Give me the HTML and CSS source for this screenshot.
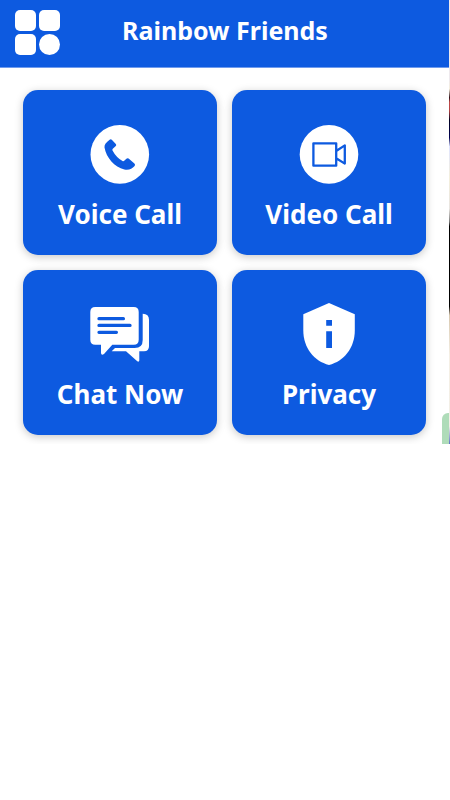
FILE: index.html
```html
<!DOCTYPE html>
<html lang="en">
<head>
<meta charset="utf-8">
<meta name="viewport" content="width=device-width, initial-scale=1">
<title>Rainbow Friends</title>
<link rel="stylesheet" href="styles.css">
</head>
<body>
<div class="screen">
  <header class="topbar">
    <button class="menu" type="button" aria-label="Menu">
      <svg width="45" height="45" viewBox="0 0 45 45" fill="#fff" aria-hidden="true">
        <rect width="21" height="21" rx="5"/>
        <rect x="24" width="21" height="21" rx="5"/>
        <rect y="24" width="21" height="21" rx="5"/>
        <circle cx="34.5" cy="34.5" r="10.5"/>
      </svg>
    </button>
    <h1 class="title">Rainbow Friends</h1>
  </header>
  <main class="grid">
    <button class="card" type="button">
      <svg class="icon" viewBox="0 0 64 64" aria-hidden="true">
        <circle cx="31.8" cy="32.4" r="29.3" fill="#fff"/>
        <path fill="#0d5ae0" d="M21.6 17.7q1.1-1 2.2 0l4 4.2q.9 1 0 2l-3 2.9q-.7.7-.3 1.6 3.6 6.8 10 10.6 1 .5 1.7-.2l2.200-2.100q1-1 2.2-.1l5.800 5q1.300 1.100.2 2.300c-2.500 2.900-5.800 4.400-10.200 3.500C26.500 45.300 18.300 35.900 16.500 25.600c-.4-3.100 1.700-5.100 5.100-7.900z"/>
      </svg>
      <span class="label">Voice Call</span>
    </button>
    <button class="card" type="button">
      <svg class="icon" viewBox="0 0 64 64" aria-hidden="true">
        <circle cx="32" cy="32.4" r="29.3" fill="#fff"/>
        <path fill="none" stroke="#0d5ae0" stroke-width="2.3" stroke-linejoin="round" d="M16.4 21.300h22.800v22.400H16.400zM39.200 29l8.600-5.600v18.200L39.200 36.200"/>
      </svg>
      <span class="label">Video Call</span>
    </button>
    <button class="card" type="button">
      <svg class="icon" viewBox="0 0 64 64" aria-hidden="true">
        <path fill="#fff" d="M7.300 5h38.400q5 0 5 5v27.700q0 5-5 5H24.300L16 52q-2.700 2-3-1v-8.300H7.300q-5 0-5-5V10q0-5 5-5z"/>
        <path fill="#fff" d="M54.700 11.700q6.300 0 6.300 6v26.600q0 5-5 5h-4.700V58.500q-.5 2-2.300.5L38 49.300H23.700L27 46h19.700q8 0 8-8z"/>
        <path fill="none" stroke="#0d5ae0" stroke-width="3.3" stroke-linecap="round" d="M11 16.700h24.400M11 23.400h31M11 30.300h17.400"/>
      </svg>
      <span class="label">Chat Now</span>
    </button>
    <button class="card" type="button">
      <svg class="icon" viewBox="0 0 64 64" aria-hidden="true">
        <path fill="#fff" d="M32 1l25.800 11.300v16C57.800 46 47 59.300 32 63 17 59.300 6.300 46 6.300 28.300v-16z"/>
        <path fill="#0d5ae0" d="M29.200 18h5.800v5.700h-5.800zM29.200 29.300h5.800V46h-5.800z"/>
      </svg>
      <span class="label">Privacy</span>
    </button>
  </main>
  <div class="edge" aria-hidden="true"></div>
  <div class="tab" aria-hidden="true"></div>
</div>
</body>
</html>
```
FILE: styles.css
```css
* {
  box-sizing: border-box;
}

body {
  margin: 0;
  background: #fff;
  font-family: "Noto Sans", "Open Sans", sans-serif;
}

.screen {
  position: relative;
}

.topbar {
  display: grid;
  grid-template-columns: 45px 1fr 45px;
  align-items: start;
  height: 68px;
  padding: 10px 15px;
  background: #0d5ae0;
  border-bottom: 1px solid #6f9bed;
}

button {
  margin: 0;
  padding: 0;
  border: 0;
  font: inherit;
  cursor: pointer;
}

.menu {
  background: none;
}

.menu svg {
  display: block;
}

.title,
.label {
  color: #fff;
  font-size: 26px;
  font-weight: 700;
  line-height: 40px;
  white-space: nowrap;
}

.title {
  margin: 0;
  font-size: 25px;
  text-align: center;
}

.grid {
  display: grid;
  grid-template-columns: 1fr 1fr;
  gap: 15px;
  padding: 22px 24px 9px 23px;
}

.card {
  display: flex;
  flex-direction: column;
  align-items: center;
  padding: 32px 0 21px;
  gap: 8px;
  border-radius: 15px;
  background: #0d5ae0;
  box-shadow: 0 2px 9px rgba(0, 0, 0, 0.22);
}

.icon {
  width: 64px;
  height: 64px;
}

/* Sliver of the next page at the right edge of the pager */
.edge {
  position: absolute;
  top: 0;
  right: 0;
  bottom: 0;
  width: 1px;
  background: linear-gradient(#eee9ed 0 18%, #f5eedc 20%, #301018 22%, #c04a4a 23%, #b04040 25%, #000020 27%, #000050 31%, #dfe4ff 33%, #f4efdc 40%, #e8e4e0 47%, #777 50%, #000 51% 69%, #d8c8b0 71%, #f5efe4 80%, #f2eee6 96%, #5c70c8 100%);
}

/* Corner of the next page's green button */
.tab {
  position: absolute;
  right: 1px;
  bottom: 0;
  width: 7px;
  height: 31px;
  border-top-left-radius: 6px;
  background: #afdcb9;
}
```
